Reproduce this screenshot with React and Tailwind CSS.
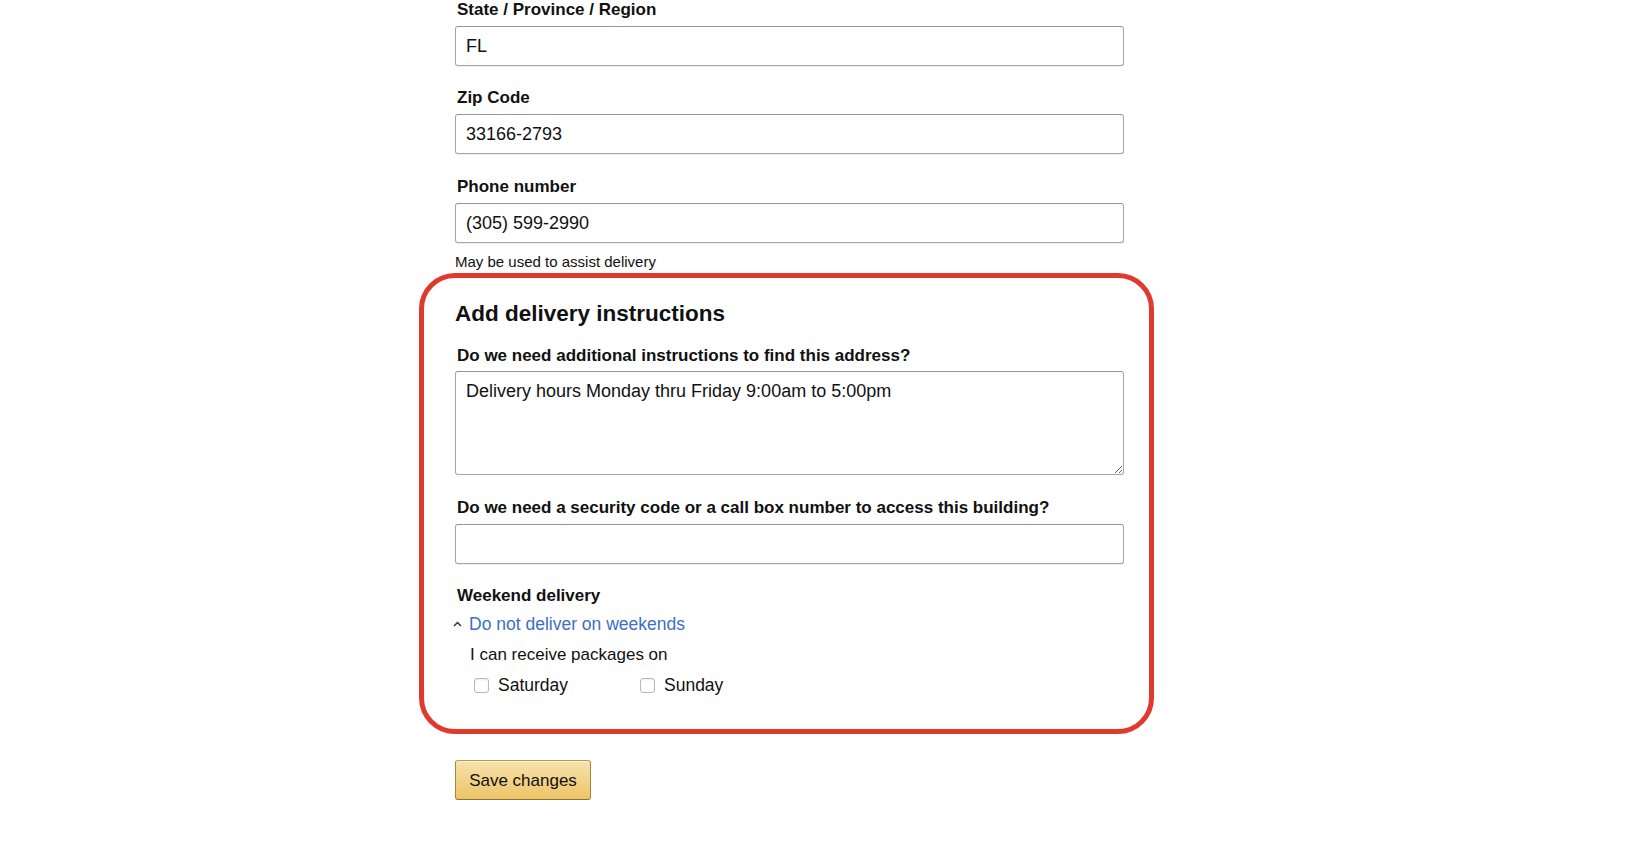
import { useState } from 'react';

const font = { fontFamily: '"Liberation Sans", Arial, sans-serif' };

function Field({ label, value, className = '' }) {
  return (
    <div className={className}>
      <label className="block text-[17px] leading-[20px] font-bold text-[#111] pl-[2px]">{label}</label>
      <input
        defaultValue={value}
        className="mt-[6px] block w-full h-[40px] rounded-[3px] border border-[#a6a6a6] border-t-[#949494] bg-white pl-[10px] text-[18px] text-[#111] shadow-[0_1px_0_rgba(0,0,0,0.07)] outline-none"
      />
    </div>
  );
}

function Checkbox({ label, className = '' }) {
  const [checked, setChecked] = useState(false);
  return (
    <label className={`flex items-center gap-[9px] cursor-pointer ${className}`}>
      <span
        onClick={() => setChecked(!checked)}
        className="w-[15px] h-[15px] rounded-[3px] border border-[#b8b8b8] bg-white shadow-[inset_0_1px_2px_rgba(0,0,0,0.08)] flex items-center justify-center text-[11px]"
      >
        {checked ? '✓' : ''}
      </span>
      <span className="text-[17.5px] text-[#111]">{label}</span>
    </label>
  );
}

export default function App() {
  return (
    <div style={font} className="w-full min-h-[860px] bg-white">
      <div className="ml-[419px] w-[735px]">
        <div className="pl-[36px] pr-[30px]">
          <Field label="State / Province / Region" value="FL" />
          <Field label="Zip Code" value="33166-2793" className="mt-[22px]" />
          <Field label="Phone number" value="(305) 599-2990" className="mt-[23px]" />
          <p className="mt-[10px] text-[15px] leading-[18px] text-[#111]">May be used to assist delivery</p>
        </div>

        <div className="mt-[2px] rounded-[36px] border-[5px] border-[#e0392d] pl-[31px] pr-[25px] pt-[22px] pb-[31px]">
          <h2 className="text-[22.5px] leading-[28px] font-bold text-[#111]">Add delivery instructions</h2>
          <label className="mt-[18px] block text-[17px] leading-[20px] font-bold text-[#111] pl-[2px]">
            Do we need additional instructions to find this address?
          </label>
          <textarea
            defaultValue="Delivery hours Monday thru Friday 9:00am to 5:00pm"
            className="mt-[5px] block w-full h-[104px] rounded-[3px] border border-[#a6a6a6] border-t-[#949494] bg-white px-[10px] pt-[8px] text-[18px] leading-[22px] text-[#111] outline-none"
          />
          <Field
            label="Do we need a security code or a call box number to access this building?"
            value=""
            className="mt-[23px]"
          />

          <p className="mt-[22px] text-[17px] leading-[20px] font-bold text-[#111] pl-[2px]">Weekend delivery</p>
          <div className="mt-[8px] flex items-center gap-[7px] -ml-[2px]">
            <svg width="9" height="6" viewBox="0 0 9 6" className="text-[#333]">
              <path d="M1 5 L4.5 1.5 L8 5" fill="none" stroke="currentColor" strokeWidth="1.5" />
            </svg>
            <a href="#" className="text-[17.5px] leading-[20px] text-[#3d6fc4]">Do not deliver on weekends</a>
          </div>
          <div className="pl-[15px]">
            <p className="mt-[11px] text-[17px] leading-[20px] text-[#111]">I can receive packages on</p>
            <div className="mt-[7px] flex items-center pl-[4px]">
              <Checkbox label="Saturday" className="w-[166px]" />
              <Checkbox label="Sunday" />
            </div>
          </div>
        </div>

        <div className="pl-[36px] mt-[26px]">
          <button className="h-[40px] w-[136px] rounded-[3px] border border-[#a88734] border-t-[#b89c52] border-b-[#8c7030] bg-gradient-to-b from-[#f7e2ad] to-[#edc465] text-[17px] text-[#111] shadow-[inset_0_1px_0_rgba(255,255,255,0.45)]">
            Save changes
          </button>
        </div>
      </div>
    </div>
  );
}
